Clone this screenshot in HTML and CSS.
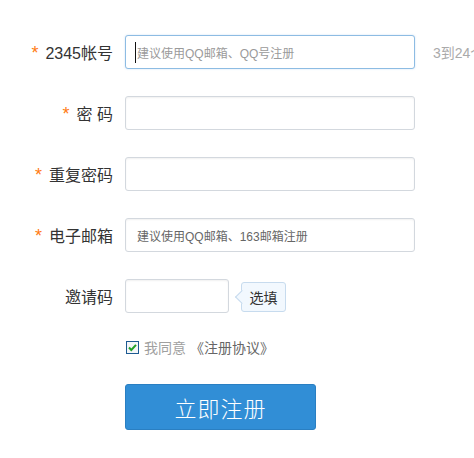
FILE: index.html
```html
<!DOCTYPE html>
<html lang="zh-CN">
<head>
<meta charset="utf-8">
<title>注册</title>
<link rel="stylesheet" href="styles.css">
</head>
<body>
<form class="form">
  <div class="row">
    <div class="label"><span class="req">*</span>2345帐号</div>
    <div class="field field-wide field-focus"><span class="caret"></span><span class="ph">建议使用QQ邮箱、QQ号注册</span></div>
    <div class="hint">3到24个字符</div>
  </div>
  <div class="row">
    <div class="label"><span class="req">*</span>密&nbsp;码</div>
    <div class="field field-wide"></div>
  </div>
  <div class="row">
    <div class="label"><span class="req">*</span>重复密码</div>
    <div class="field field-wide"></div>
  </div>
  <div class="row">
    <div class="label"><span class="req">*</span>电子邮箱</div>
    <div class="field field-wide"><span class="val">建议使用QQ邮箱、163邮箱注册</span></div>
  </div>
  <div class="row row-invite">
    <div class="label">邀请码</div>
    <div class="field field-short"></div>
    <div class="tip">选填</div>
  </div>
  <div class="agree">
    <svg class="check" width="13" height="13" viewBox="0 0 13 13">
      <rect x="0.5" y="0.5" width="12" height="12" fill="#f4f6f8" stroke="#1d5a92"/>
      <path d="M3 6.5 L5.3 9 L10 3.8" fill="none" stroke="#23a128" stroke-width="2"/>
    </svg>
    <span class="agree-text">我同意</span>
    <span class="agree-link">《注册协议》</span>
  </div>
  <div class="btn-row">
    <div class="btn">立即注册</div>
  </div>
</form>
</body>
</html>
```

FILE: styles.css
```css
html, body {
  margin: 0;
  padding: 0;
  background: #fff;
  overflow: hidden;
}
body {
  font-family: "Liberation Sans", "Noto Sans CJK SC", sans-serif;
  color: #333;
  width: 474px;
  height: 458px;
}
.form {
  padding-top: 35px;
  margin: 0;
}
.row {
  display: flex;
  align-items: center;
  height: 34px;
  margin-bottom: 27px;
  white-space: nowrap;
}
.row-invite {
  margin-top: 3px;
  margin-bottom: 0;
}
.label {
  width: 113px;
  margin-right: 12px;
  text-align: right;
  font-size: 16px;
  color: #333;
  flex: none;
}
.req {
  color: #ff7a12;
  font-size: 18px;
  vertical-align: 0;
  margin-right: 7px;
}
.field {
  box-sizing: border-box;
  height: 34px;
  border: 1px solid #d3d8de;
  border-radius: 3px;
  box-shadow: inset 0 1px 2px rgba(0, 0, 0, 0.06);
  background: #fff;
  display: flex;
  align-items: center;
  padding-left: 9px;
  flex: none;
  font-size: 12px;
}
.field-wide { width: 290px; }
.field-short { width: 104px; }
.field-focus {
  border-color: #8dbce3;
  box-shadow: 0 0 2px rgba(100, 160, 220, 0.35);
}
.caret {
  display: inline-block;
  width: 1px;
  height: 21px;
  background: #111;
  margin-right: 1px;
}
.ph {
  color: #9a9a9a;
}
.val {
  color: #666;
  padding-left: 2px;
}
.hint {
  margin-left: 18px;
  font-size: 14px;
  color: #aaa;
  flex: 1 1 auto;
  min-width: 0;
  overflow: hidden;
}
.tip {
  position: relative;
  box-sizing: border-box;
  width: 45px;
  height: 30px;
  margin-left: 12px;
  margin-top: 2px;
  border: 1px solid #c7dbee;
  border-radius: 3px;
  background: #f2f8fe;
  font-size: 14px;
  color: #333;
  display: flex;
  align-items: center;
  justify-content: center;
  font-family: "Noto Sans CJK SC", sans-serif;
}
.tip::before {
  content: "";
  position: absolute;
  left: -5px;
  top: 9px;
  width: 9px;
  height: 9px;
  background: #f2f8fe;
  border-left: 1px solid #c7dbee;
  border-bottom: 1px solid #c7dbee;
  transform: rotate(45deg);
}
.agree {
  display: flex;
  align-items: center;
  height: 20px;
  margin-top: 24px;
  padding-left: 126px;
  font-size: 14px;
  font-family: "Noto Sans CJK SC", sans-serif;
}
.check {
  display: block;
  margin-right: 5px;
}
.agree-text {
  color: #a0a0a0;
}
.agree-link {
  color: #666;
  margin-left: 4px;
}
.btn-row {
  margin-top: 27px;
  padding-left: 125px;
}
.btn {
  box-sizing: border-box;
  width: 191px;
  height: 46px;
  background: #318ed6;
  border: 1px solid #2a7fc2;
  border-radius: 3px;
  color: #fff;
  font-size: 22px;
  font-family: "Noto Sans CJK SC", sans-serif;
  font-weight: 300;
  display: flex;
  align-items: center;
  justify-content: center;
  letter-spacing: 1px;
}
```
